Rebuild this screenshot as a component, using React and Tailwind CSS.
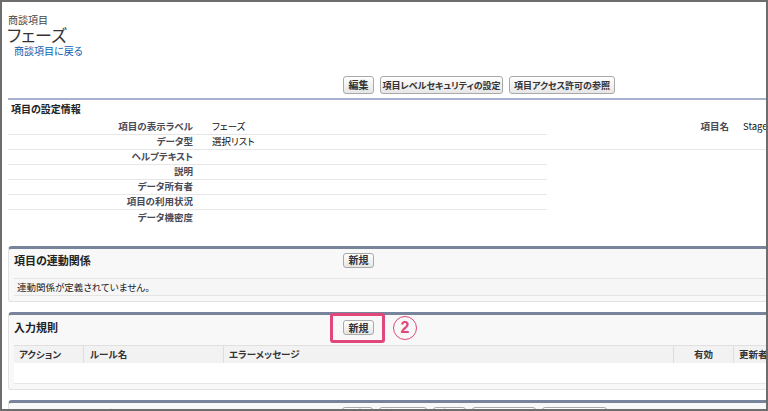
import React from "react";

const font = "[font-family:'Noto_Sans_CJK_JP','Noto_Sans',sans-serif] [font-feature-settings:'palt']";

function Btn({ children, w, h = "h-[15px]", t = "text-[10px]" }) {
  return (
    <div
      className={`${w} ${h} ${t} shrink-0 flex items-center justify-center rounded-[3px] border border-[#a9a9a9] bg-gradient-to-b from-white to-[#e6e6e6] font-bold text-[#333] leading-none whitespace-nowrap overflow-hidden`}
    >
      {children}
    </div>
  );
}

const rows = [
  ["項目の表示ラベル", "フェーズ"],
  ["データ型", "選択リスト"],
  ["ヘルプテキスト", ""],
  ["説明", ""],
  ["データ所有者", ""],
  ["項目の利用状況", ""],
  ["データ機密度", ""],
];

export default function App() {
  return (
    <div className={`${font} relative w-[768px] h-[411px] overflow-hidden border-2 border-[#6d6d6d] bg-white text-[#222]`}>
      <div className="pl-[6px] flex flex-col">
        {/* header */}
        <div className="pt-[12px] flex flex-col">
          <div className="h-[12px] leading-[12px] text-[10px] text-[#444]">商談項目</div>
          <div className="h-[18px] leading-[18px] text-[17px] text-[#333] -ml-[1px]">フェーズ</div>
          <div className="h-[14px] leading-[14px] text-[10px] text-[#0a5fb4] pl-[6px]">商談項目に戻る</div>
        </div>

        {/* buttons */}
        <div className="mt-[18px] ml-[335px] flex gap-[6px]">
          <Btn w="w-[31px]" h="h-[18px]">編集</Btn>
          <Btn w="w-[123px]" h="h-[18px]" t="text-[9px]">項目レベルセキュリティの設定</Btn>
          <Btn w="w-[106px]" h="h-[18px]" t="text-[9px]">項目アクセス許可の参照</Btn>
        </div>

        <div className="mt-[4px] h-[2px] bg-[#a8b2cf] w-[770px]" />

        <div className="h-[18px] leading-[18px] pl-[3px] text-[10px] font-bold text-[#222]">項目の設定情報</div>

        {/* detail table */}
        <div className="mt-[2px] flex w-[770px]">
          <div className="w-[539px] shrink-0 flex flex-col">
            {rows.map(([l, v], i) => (
              <div
                key={l}
                className={`h-[15px] flex items-center ${i < rows.length - 1 ? "border-b border-[#e6e6e6]" : ""}`}
              >
                <div className="w-[185px] text-right text-[9.5px] font-bold text-[#4a4a56] leading-none">{l}</div>
                <div className="pl-[19px] text-[9.5px] text-[#111] leading-none">{v}</div>
              </div>
            ))}
          </div>
          <div className="w-[231px] shrink-0 self-start h-[30px] border-b border-[#e6e6e6] flex items-start">
            <div className="h-[14px] flex items-center w-[182px] shrink-0 justify-end text-[9.5px] font-bold text-[#4a4a56] leading-none">
              項目名
            </div>
            <div className="h-[14px] flex items-center pl-[14px] text-[9.5px] text-[#111] leading-none whitespace-nowrap">StageName</div>
          </div>
        </div>

        {/* section: 項目の連動関係 */}
        <div className="mt-[21px] w-[780px] rounded-t-[4px] rounded-b-[3px] border-t-[3px] border-t-[#78839c] border-l border-b border-[#e2e2e2] bg-[#f8f8f8] pl-[5px] pb-[5px]">
          <div className="h-[22px] flex items-center">
            <div className="w-[329px] text-[11px] font-bold text-[#222]">項目の連動関係</div>
            <Btn w="w-[31px]">新規</Btn>
          </div>
          <div className="mt-[7px] h-[18px] border-t border-b border-[#e4e4e4] bg-[#f6f6f6] flex items-center pl-[3px] text-[9.5px] text-[#222]">
            連動関係が定義されていません。
          </div>
        </div>

        {/* section: 入力規則 */}
        <div className="mt-[10px] w-[780px] rounded-t-[4px] rounded-b-[3px] border-t-[3px] border-t-[#78839c] border-l border-b border-[#e2e2e2] bg-[#f8f8f8] pl-[5px] pb-[5px]">
          <div className="h-[25px] flex items-center">
            <div className="w-[329px] text-[11px] font-bold text-[#222]">入力規則</div>
            <Btn w="w-[31px]">新規</Btn>
          </div>
          <div className="mt-[5px] flex flex-col">
            <div className="h-[18px] flex bg-[#f2f2f2] border-t border-[#e0e0e0] text-[9.5px] font-bold text-[#333]">
              <div className="w-[69px] flex items-center pl-[5px]">アクション</div>
              <div className="w-[140px] flex items-center pl-[6px] border-l border-[#dedede]">ルール名</div>
              <div className="w-[450px] flex items-center pl-[5px] border-l border-[#dedede]">エラーメッセージ</div>
              <div className="w-[60px] flex items-center justify-center border-l border-[#dedede]">有効</div>
              <div className="flex-1 flex items-center pl-[5px] border-l border-[#dedede]">更新者</div>
            </div>
            <div className="h-[21px] bg-white border-b border-[#e6e6e6]" />
          </div>
        </div>

        {/* section: 選択リスト値 (cut off) */}
        <div className="mt-[10px] w-[780px] rounded-t-[4px] border-t-[3px] border-t-[#78839c] border-l border-[#e2e2e2] bg-[#f8f8f8] pl-[5px]">
          <div className="h-[22px] flex items-center">
            <div className="w-[328px] text-[11px] font-bold text-[#222] flex gap-[36px]">
              <span>商談</span>
              <span>フェーズ選択リスト値</span>
            </div>
            <div className="flex gap-[6px]">
              <Btn w="w-[31px]">新規</Btn>
              <Btn w="w-[48px]">並び替え</Btn>
              <Btn w="w-[33px]">表示</Btn>
              <Btn w="w-[64px]">値の置換</Btn>
              <Btn w="w-[65px]">プロセス</Btn>
            </div>
          </div>
        </div>
      </div>

      {/* annotation overlay */}
      <div className="absolute left-[328px] top-[311px] w-[55px] h-[30px] rounded-[3px] border-[3px] border-[#e0477a]" />
      <div className="absolute left-[391px] top-[314px] w-[24px] h-[24px] rounded-full border-[1.5px] border-[#e0477a] flex items-center justify-center text-[16px] font-bold text-[#e0477a] leading-none [font-family:'Liberation_Sans',sans-serif]">
        2
      </div>
    </div>
  );
}
